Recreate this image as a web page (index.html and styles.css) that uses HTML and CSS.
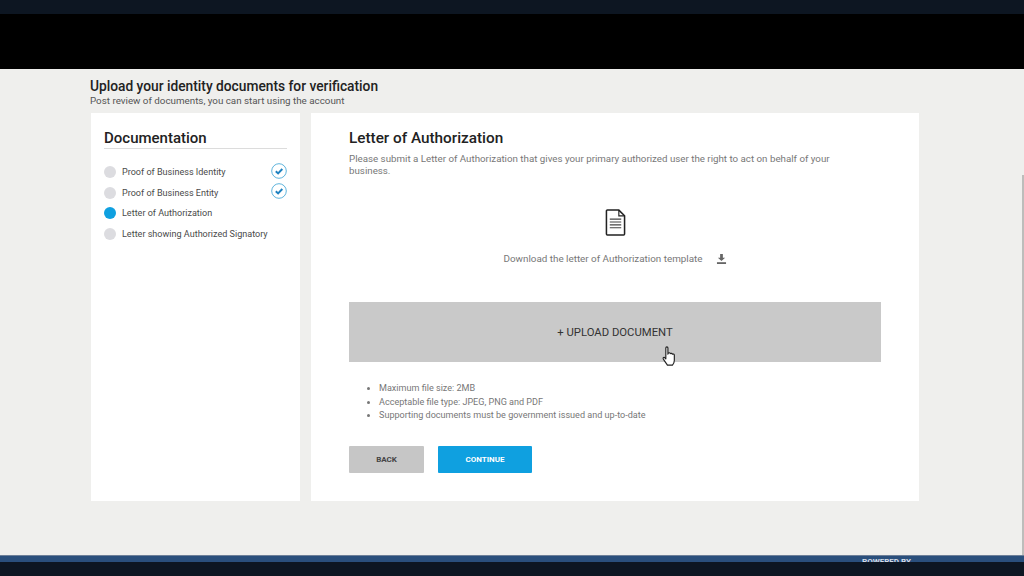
FILE: index.html
```html
<!DOCTYPE html>
<html lang="en">
<head>
  <meta charset="UTF-8">
  <meta name="viewport" content="width=device-width, initial-scale=1.0">
  <title>Upload documents</title>
  <link rel="stylesheet" href="styles.css">
</head>
<body>
  <div class="edge-bar"></div>
  <div class="black-band"></div>

  <main class="content">
    <div class="scroll-thumb"></div>
    <div class="page-head">
      <h1>Upload your identity documents for verification</h1>
      <p>Post review of documents, you can start using the account</p>
    </div>

    <div class="cards">
      <aside class="card side-card">
        <h2>Documentation</h2>
        <ul class="steps">
          <li class="step">
            <span class="dot"></span>
            <span class="step-name">Proof of Business Identity</span>
            <svg class="tick" viewBox="0 0 16 16"><circle cx="8" cy="8" r="7.3" fill="none" stroke="#5fb4dc" stroke-width="1"/><path d="M4.8 8.2l2.3 2.2 4.200-4.400" fill="none" stroke="#1f82c0" stroke-width="2"/></svg>
          </li>
          <li class="step">
            <span class="dot"></span>
            <span class="step-name">Proof of Business Entity</span>
            <svg class="tick" viewBox="0 0 16 16"><circle cx="8" cy="8" r="7.3" fill="none" stroke="#5fb4dc" stroke-width="1"/><path d="M4.8 8.2l2.3 2.2 4.200-4.400" fill="none" stroke="#1f82c0" stroke-width="2"/></svg>
          </li>
          <li class="step">
            <span class="dot dot-active"></span>
            <span class="step-name">Letter of Authorization</span>
          </li>
          <li class="step">
            <span class="dot"></span>
            <span class="step-name">Letter showing Authorized Signatory</span>
          </li>
        </ul>
      </aside>

      <section class="card main-card">
        <h2>Letter of Authorization</h2>
        <p class="intro">Please submit a Letter of Authorization that gives your primary authorized user the right to act on behalf of your business.</p>

        <div class="template">
          <svg class="doc-icon" viewBox="0 0 22 28">
            <path d="M2.5 1h12l6 6v19a1 1 0 0 1-1 1h-17a1 1 0 0 1-1-1V2a1 1 0 0 1 1-1z" fill="#fff" stroke="#222" stroke-width="1.6"/>
            <path d="M14.5 1v6h6" fill="none" stroke="#222" stroke-width="1.2"/>
            <path d="M5 10.5h12M5 13.5h12M5 16.5h12M5 19.5h12" stroke="#444" stroke-width="1.2"/>
          </svg>
          <div class="download">
            <span>Download the letter of Authorization template</span>
            <svg class="dl-icon" viewBox="0 0 12 11"><path d="M4.500 0h3v4h2.500L6 7.800 2 4h2.500z" fill="#666"/><path d="M1 9h10v2H1z" fill="#666"/></svg>
          </div>
        </div>

        <div class="upload-box">
          + UPLOAD DOCUMENT
          <svg class="cursor" viewBox="0 0 14 20">
            <path d="M3.500 1.800c0-1.200 2-1.200 2 0v6l.3-1c1-.6 1.900-.4 2 .5.700-.6 1.800-.4 1.900.6.800-.5 1.800-.2 1.900.8v5c0 2-1 3.500-1.800 4.500H5c-1-1.500-3-4-4-6-.4-1 .8-1.900 1.600-1l.9 1z" fill="#fff" stroke="#222" stroke-width="1.100" stroke-linejoin="round"/>
          </svg>
        </div>

        <ul class="rules">
          <li>Maximum file size: 2MB</li>
          <li>Acceptable file type: JPEG, PNG and PDF</li>
          <li>Supporting documents must be government issued and up-to-date</li>
        </ul>

        <div class="actions">
          <button class="btn btn-back">BACK</button>
          <button class="btn btn-continue">CONTINUE</button>
        </div>
      </section>
    </div>
  </main>

  <footer class="footer">
    <span class="powered">POWERED BY</span>
  </footer>
  <div class="edge-bar"></div>
</body>
</html>
```

FILE: styles.css
```css
* {
  box-sizing: border-box;
}

html, body {
  height: 100%;
}

body {
  margin: 0;
  display: flex;
  flex-direction: column;
  height: 576px;
  overflow: hidden;
  font-family: Roboto, "Liberation Sans", sans-serif;
  background: #efefed;
  color: #222;
}

.edge-bar {
  height: 14px;
  background: #0d1622;
  flex: none;
}

.black-band {
  height: 55px;
  background: #000;
  flex: none;
}

.content {
  position: relative;
  height: 486px;
  flex: none;
  padding: 9px 105px 0 91px;
  background: #efefed;
}

.scroll-thumb {
  position: absolute;
  top: 106px;
  right: 0;
  bottom: 0;
  width: 2px;
  background: #bdbdbb;
}

.page-head {
  height: 35px;
  margin-left: -1px;
}

.page-head h1 {
  margin: 0;
  font-size: 13.750px;
  line-height: 16px;
  font-weight: 500;
  color: #222;
}

.page-head p {
  margin: 0;
  font-size: 9.800px;
  line-height: 13px;
  color: #555;
}

.cards {
  display: flex;
  gap: 11px;
  height: 388px;
}

.card {
  background: #fff;
  height: 100%;
}

.side-card {
  width: 209px;
  padding: 16px 13px 0 13px;
}

.side-card h2 {
  margin: 0;
  font-size: 15px;
  line-height: 19px;
  font-weight: 500;
  color: #222;
  border-bottom: 1px solid #dcdcdc;
}

.steps {
  list-style: none;
  margin: 13px 0 0;
  padding: 0;
}

.step {
  display: flex;
  align-items: center;
  height: 20.500px;
  font-size: 9.050px;
  color: #4a4a4a;
}

.dot {
  width: 12px;
  height: 12px;
  border-radius: 50%;
  background: #dcdce0;
  margin-right: 6px;
  flex: none;
}

.dot-active {
  background: #0fa0e0;
}

.step-name {
  flex: 1;
}

.tick {
  width: 16px;
  height: 16px;
  flex: none;
  margin-top: -3px;
}

.main-card {
  width: 608px;
  padding: 16px 38px 0 38px;
}

.main-card h2 {
  margin: 0;
  font-size: 15.300px;
  line-height: 19px;
  font-weight: 500;
  color: #222;
}

.intro {
  margin: 5px 0 0;
  padding-right: 40px;
  font-size: 9.750px;
  line-height: 11.500px;
  color: #777;
}

.template {
  display: flex;
  flex-direction: column;
  align-items: center;
  margin-top: 33px;
}

.doc-icon {
  width: 21px;
  height: 27px;
}

.download {
  display: flex;
  align-items: center;
  gap: 13px;
  margin-top: 17px;
  font-size: 9.850px;
  line-height: 12px;
  color: #777;
}

.dl-icon {
  width: 11px;
  height: 10px;
}

.upload-box {
  position: relative;
  display: flex;
  align-items: center;
  justify-content: center;
  height: 60px;
  margin-top: 37px;
  background: #c9c9c9;
  font-size: 11.300px;
  color: #333;
}

.cursor {
  position: absolute;
  left: 313px;
  top: 44px;
  width: 15px;
  height: 21px;
}

.rules {
  margin: 20px 0 0;
  padding: 0 0 0 30px;
  font-size: 9.070px;
  line-height: 13.700px;
  color: #777;
}

.actions {
  display: flex;
  gap: 14px;
  margin-top: 23px;
}

.btn {
  height: 27px;
  border: none;
  border-radius: 1px;
  font-family: Roboto, "Liberation Sans", sans-serif;
  font-size: 8px;
  font-weight: 700;
}

.btn-back {
  width: 75px;
  background: #c6c6c6;
  color: #444;
}

.btn-continue {
  width: 94px;
  background: #0fa0e0;
  color: #fff;
}

.footer {
  position: relative;
  height: 7px;
  flex: none;
  overflow: hidden;
  background: #2a4f7c;
  border-top: 1px solid #6d7f98;
}

.powered {
  position: absolute;
  left: 862px;
  top: 1px;
  font-size: 8px;
  line-height: 10px;
  font-weight: 700;
  color: #d5dde8;
}
```
